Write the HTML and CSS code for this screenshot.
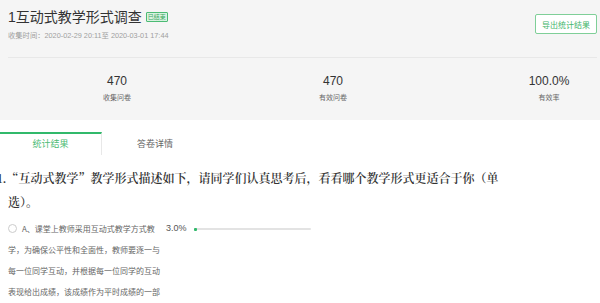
FILE: index.html
```html
<!DOCTYPE html>
<html lang="zh-cn">
<head>
<meta charset="UTF-8" />
<meta name="viewport" content="width=device-width, initial-scale=1" />
<title>统计结果</title>
<link rel="stylesheet" href="styles.css">
</head>
<body>
  <div class="header">
    <div class="header-top">
      <div class="title-block">
        <div class="title-row">
          <h1 class="title">1互动式教学形式调查</h1>
          <span class="badge">已结束</span>
        </div>
        <div class="date">收集时间：2020-02-29 20:11至 2020-03-01 17:44</div>
      </div>
      <button class="export-btn">导出统计结果</button>
    </div>
    <div class="stats">
      <div class="stat">
        <div class="stat-num">470</div>
        <div class="stat-label">收集问卷</div>
      </div>
      <div class="stat">
        <div class="stat-num">470</div>
        <div class="stat-label">有效问卷</div>
      </div>
      <div class="stat">
        <div class="stat-num">100.0%</div>
        <div class="stat-label">有效率</div>
      </div>
    </div>
  </div>

  <div class="tabs">
    <div class="tab active">统计结果</div>
    <div class="tab">答卷详情</div>
  </div>

  <div class="question">1.“互动式教学”教学形式描述如下，请同学们认真思考后，看看哪个教学形式更适合于你（单选）。</div>

  <div class="option">
    <div class="opt-label"><span class="radio"></span>A、课堂上教师采用互动式教学方式教学，为确保公平性和全面性，教师要逐一与每一位同学互动，并根据每一位同学的互动表现给出成绩，该成绩作为平时成绩的一部</div>
    <div class="opt-pct">3.0%</div>
    <div class="bar"><div class="bar-fill" style="width: 3%"></div></div>
  </div>
</body>
</html>
```

FILE: styles.css
```css
html, body {
  overflow: hidden;
}
body {
  margin: 0;
  background: #fff;
  font-family: 'Liberation Sans', 'Noto Sans CJK SC', sans-serif;
  color: #333;
}
.header {
  background: #f5f5f5;
  padding: 0 3px 0 8px;
}
.header-top {
  display: flex;
  justify-content: space-between;
  align-items: flex-start;
  height: 57px;
  border-bottom: 1px solid #e8e8e8;
}
.title-block {
  padding-top: 8px;
}
.title-row {
  display: flex;
  align-items: center;
  gap: 4px;
}
.title {
  margin: 0;
  font-size: 14px;
  line-height: 18px;
  font-weight: normal;
  color: #333;
}
.badge {
  font-size: 6px;
  line-height: 8px;
  padding: 0 1px;
  color: #3aa862;
  background: #d9f2e1;
  border: 1px solid #4cbb74;
  border-radius: 1px;
  font-family: 'Noto Sans CJK SC', sans-serif;
}
.date {
  margin-top: 5px;
  font-size: 7.3px;
  line-height: 10px;
  color: #a0a0a0;
}
.export-btn {
  margin-top: 14px;
  height: 20px;
  padding: 0 6px;
  background: #fff;
  border: 1px solid #7fcf98;
  border-radius: 2px;
  color: #43b56b;
  font-family: 'Noto Sans CJK SC', sans-serif;
  font-size: 8px;
  cursor: pointer;
}
.stats {
  display: grid;
  grid-template-columns: repeat(3, 216px);
  padding: 16px 0 0 1px;
  height: 46px;
}
.stat {
  text-align: center;
}
.stat-num {
  font-size: 12px;
  line-height: 14px;
  color: #333;
}
.stat-label {
  margin-top: 5px;
  font-size: 7px;
  line-height: 10px;
  color: #666;
}
.tabs {
  display: flex;
  margin-top: 12px;
}
.tab {
  width: 106px;
  height: 21px;
  line-height: 21px;
  border-top: 2px solid transparent;
  text-align: center;
  font-size: 9px;
  color: #666;
  cursor: pointer;
}
.tab.active {
  width: 101px;
  border-top-color: #31b96b;
  border-right: 1px solid #e8e8e8;
  color: #4cbb74;
}
.question {
  margin-top: 11px;
  padding-left: 8px;
  width: 492px;
  text-indent: -11px;
  font-family: 'Noto Serif CJK SC', 'Liberation Serif', 'Noto Sans CJK SC', serif;
  font-size: 12px;
  line-height: 24px;
  font-weight: 600;
  color: #333;
}
.option {
  display: flex;
  align-items: flex-start;
  margin-top: 4px;
  padding-left: 8px;
  font-family: 'Noto Sans CJK SC', sans-serif;
  font-size: 8px;
  line-height: 21px;
  color: #666;
}
.opt-label {
  width: 156px;
}
.radio {
  display: inline-block;
  width: 7px;
  height: 7px;
  border: 1px solid #ccc;
  border-radius: 50%;
  vertical-align: -1px;
  margin: 0 5px 0 0;
}
.opt-pct {
  margin-left: 2px;
  font-family: 'Liberation Sans', sans-serif;
  font-size: 9px;
  color: #555;
}
.bar {
  width: 117px;
  height: 2px;
  margin: 10px 0 0 7px;
  background: #e3e3e3;
  border-radius: 1px;
}
.bar-fill {
  height: 3px;
  margin-top: -0.5px;
  background: #31b96b;
  border-radius: 1px;
}
```
